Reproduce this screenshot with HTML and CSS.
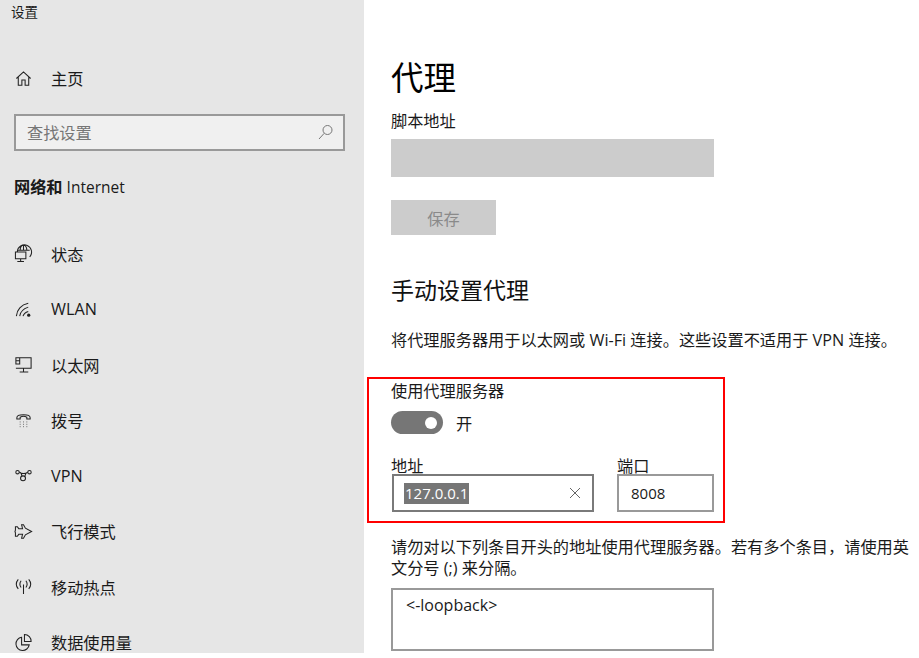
FILE: index.html
```html
<!DOCTYPE html>
<html lang="zh-CN">
<head>
<meta charset="utf-8">
<title>设置</title>
<link rel="stylesheet" href="styles.css">
</head>
<body>
<div class="app">
  <aside class="sidebar">
    <div class="win-title">设置</div>
    <div class="nav-row home-row">
      <svg class="icon" viewBox="0 0 20 20"><path d="M2.500 10 10 3l7.500 7M4.500 8.500V17h3.800v-5.500h3.400V17h3.800V8.500"/></svg>
      <span>主页</span>
    </div>
    <div class="search">
      <span>查找设置</span>
      <svg class="search-icon" viewBox="0 0 16 16"><circle cx="9.500" cy="6" r="4.500"/><path d="M6.200 9.300 1 15"/></svg>
    </div>
    <div class="section-title"><b>网络和</b> Internet</div>
    <nav class="nav">
      <div class="nav-row">
        <svg class="icon" viewBox="0 0 20 20"><path d="M3.500 8a7.500 7.500 0 1 1 13 5.500M3.500 6.500h13M10 1v5.500M6.500 6.500c0-3 1.500-5 3.500-5.500 2 .5 3.500 2.500 3.500 5.500M1.500 8.500h11v7h-11zM7 15.500v2.500M3.500 18.500h7"/></svg>
        <span>状态</span>
      </div>
      <div class="nav-row">
        <svg class="icon" viewBox="0 0 20 20"><path d="M2.500 17C3 10.500 7.500 5 15 3.500M6 17c.5-4 3-7.500 9-9.500M9.500 17c.5-2 2-4 5.500-5"/><circle class="dot" cx="15.500" cy="16" r="1.700"/></svg>
        <span>WLAN</span>
      </div>
      <div class="nav-row">
        <svg class="icon" viewBox="0 0 20 20"><path d="M6 3h12v11H2M10 14v3.500M6 18h9M2 3h4v6.500H2zM2 6h4"/></svg>
        <span>以太网</span>
      </div>
      <div class="nav-row">
        <svg class="icon" viewBox="0 0 20 20"><path d="M3 8.500V7c0-4 14-4 14 0v1.500h-3.500V6.500c-2-1-5-1-7 0v2z"/><path class="dots" d="M6 11.500h1M9.500 11.500h1M13 11.500h1M6 14h1M9.500 14h1M13 14h1M6 16.500h1M9.500 16.500h1M13 16.500h1"/></svg>
        <span>拨号</span>
      </div>
      <div class="nav-row">
        <svg class="icon" viewBox="0 0 20 20"><circle cx="3.700" cy="6.500" r="1.800"/><circle cx="16.300" cy="6.500" r="1.800"/><circle cx="9.500" cy="13" r="2.600"/><path d="M5.500 6.500c3 0 2.500 3 2.800 4.200M14.500 6.500c-3 0-2 3-3.300 4.700M5.500 6.500c2 1.500 4 1.500 4.500 1.500s3 0 4.500-1.500"/></svg>
        <span>VPN</span>
      </div>
      <div class="nav-row">
        <svg class="icon" viewBox="0 0 20 20"><path d="M18.500 10 12 6.500 10 3H8l1 4H5L3.500 5h-2v3.500L1 10l.5 1.500V15h2L5 13h4l-1 4h2l2-3.500z"/></svg>
        <span>飞行模式</span>
      </div>
      <div class="nav-row">
        <svg class="icon" viewBox="0 0 20 20"><path d="M10 8v10M7.500 4c-1.500 2-1.500 5 0 7M12.500 4c1.500 2 1.500 5 0 7M4.500 2.500c-2.500 3-2.500 7 0 10M15.500 2.500c2.500 3 2.500 7 0 10"/></svg>
        <span>移动热点</span>
      </div>
      <div class="nav-row">
        <svg class="icon" viewBox="0 0 20 20"><path d="M8 4.500a7 7 0 1 0 8 8H8zM11 1.500a7 7 0 0 1 7 7.500h-7z"/></svg>
        <span>数据使用量</span>
      </div>
    </nav>
  </aside>
  <main class="content">
    <h1>代理</h1>
    <div class="label">脚本地址</div>
    <div class="disabled-field"></div>
    <div class="disabled-button">保存</div>
    <h2>手动设置代理</h2>
    <p class="intro">将代理服务器用于以太网或 Wi-Fi 连接。这些设置不适用于 VPN 连接。</p>
    <div class="label use-proxy">使用代理服务器</div>
    <div class="toggle-row">
      <span class="toggle"><span class="knob"></span></span>
      <span>开</span>
    </div>
    <div class="address-row">
      <div class="address-col">
        <div class="label tight">地址</div>
        <div class="input address"><span class="selected">127.0.0.1</span>
          <svg class="clear" viewBox="0 0 12 12"><path d="M1 1l10 10M11 1 1 11"/></svg>
        </div>
      </div>
      <div class="port-col">
        <div class="label tight">端口</div>
        <div class="input port">8008</div>
      </div>
    </div>
    <p class="except">请勿对以下列条目开头的地址使用代理服务器。若有多个条目，请使用英文分号 (;) 来分隔。</p>
    <div class="textarea">&lt;-loopback&gt;</div>
    <div class="highlight"></div>
  </main>
</div>
</body>
</html>
```
FILE: styles.css
```css
* { box-sizing: border-box; }
html, body { margin: 0; height: 100%; background: #fff; overflow: hidden; }
body { font-family: "Open Sans", "Noto Sans CJK SC", sans-serif; font-size: 16.2px; color: #1a1a1a; }
.app { display: flex; height: 653px; overflow: hidden; }
.sidebar { width: 364px; flex: none; background: #e6e6e6; padding: 0 0 0 14px; overflow: hidden; }
.win-title { font-size: 13.500px; line-height: 18px; height: 18px; margin: 3px 0 0 -3px; }
.nav-row { display: flex; align-items: center; gap: 18px; }
.home-row { margin-top: 29px; height: 56px; }
.icon { width: 19px; height: 19px; fill: none; stroke: #222; stroke-width: 1.100; flex: none; }
.icon .dot { fill: #222; stroke: none; }
.icon .dots { stroke-width: 1; stroke: #666; }
.search { width: 331px; height: 37px; margin-top: 8px; border: 2px solid #999; background: #f0f0f0; color: #767676; display: flex; align-items: center; justify-content: space-between; padding: 0 9px 2px 11px; }
.search-icon { width: 16px; height: 16px; fill: none; stroke: #777; stroke-width: 1; }
.section-title { margin-top: 23px; line-height: 26px; font-weight: 500; font-size: 15.500px; }
.section-title b { font-weight: 700; font-size: 16.2px; }
.nav { margin-top: 26px; }
.nav .nav-row { height: 55.500px; }
.content { flex: 1; padding: 55px 0 0 27px; position: relative; min-width: 0; }
h1 { font-size: 32.500px; font-weight: 400; line-height: 46px; margin: 0; color: #000; }
.label { line-height: 22px; height: 22px; color: #1a1a1a; }
.content > .label:first-of-type { margin-top: 9px; }
.disabled-field { width: 323px; height: 38px; background: #ccc; margin-top: 7px; }
.disabled-button { width: 105px; height: 35px; background: #ccc; color: #8a8a8a; margin-top: 23px; display: flex; align-items: center; justify-content: center; }
h2 { font-size: 23px; font-weight: 400; line-height: 32px; margin: 39px 0 0; color: #111; }
.intro { margin: 23px 0 0; line-height: 22px; white-space: nowrap; }
.label.use-proxy { margin-top: 29px; }
.toggle-row { display: flex; align-items: center; gap: 13px; margin-top: 9px; height: 23px; }
.toggle { width: 52px; height: 23px; border-radius: 12px; background: #767676; display: flex; align-items: center; justify-content: flex-end; padding-right: 6px; }
.knob { width: 12px; height: 12px; border-radius: 50%; background: #fff; }
.address-row { display: flex; gap: 23px; margin-top: 20px; }
.label.tight { line-height: 24px; height: 20px; }
.input { height: 38px; border: 2px solid #999; display: flex; align-items: center; background: #fff; margin-top: 0; font-size: 15px; }
.address { width: 202px; margin-left: 1px; border-color: #7a7a7a; padding: 0 10px 0 10px; justify-content: space-between; }
.selected { background: #767676; color: #fff; line-height: 21px; padding: 0 1px; }
.clear { width: 12px; height: 12px; fill: none; stroke: #666; stroke-width: 1; margin-right: 1px; }
.port { width: 97px; padding: 0 12px; }
.except { margin: 25px 0 0; width: 525px; line-height: 21px; }
.textarea { width: 323px; height: 63px; margin-top: 9px; border: 2px solid #999; padding: 4px 13px; line-height: 22px; font-size: 16px; }
.highlight { position: absolute; left: 3px; top: 377px; width: 358px; height: 146px; border: 2px solid #f00; pointer-events: none; }
```
